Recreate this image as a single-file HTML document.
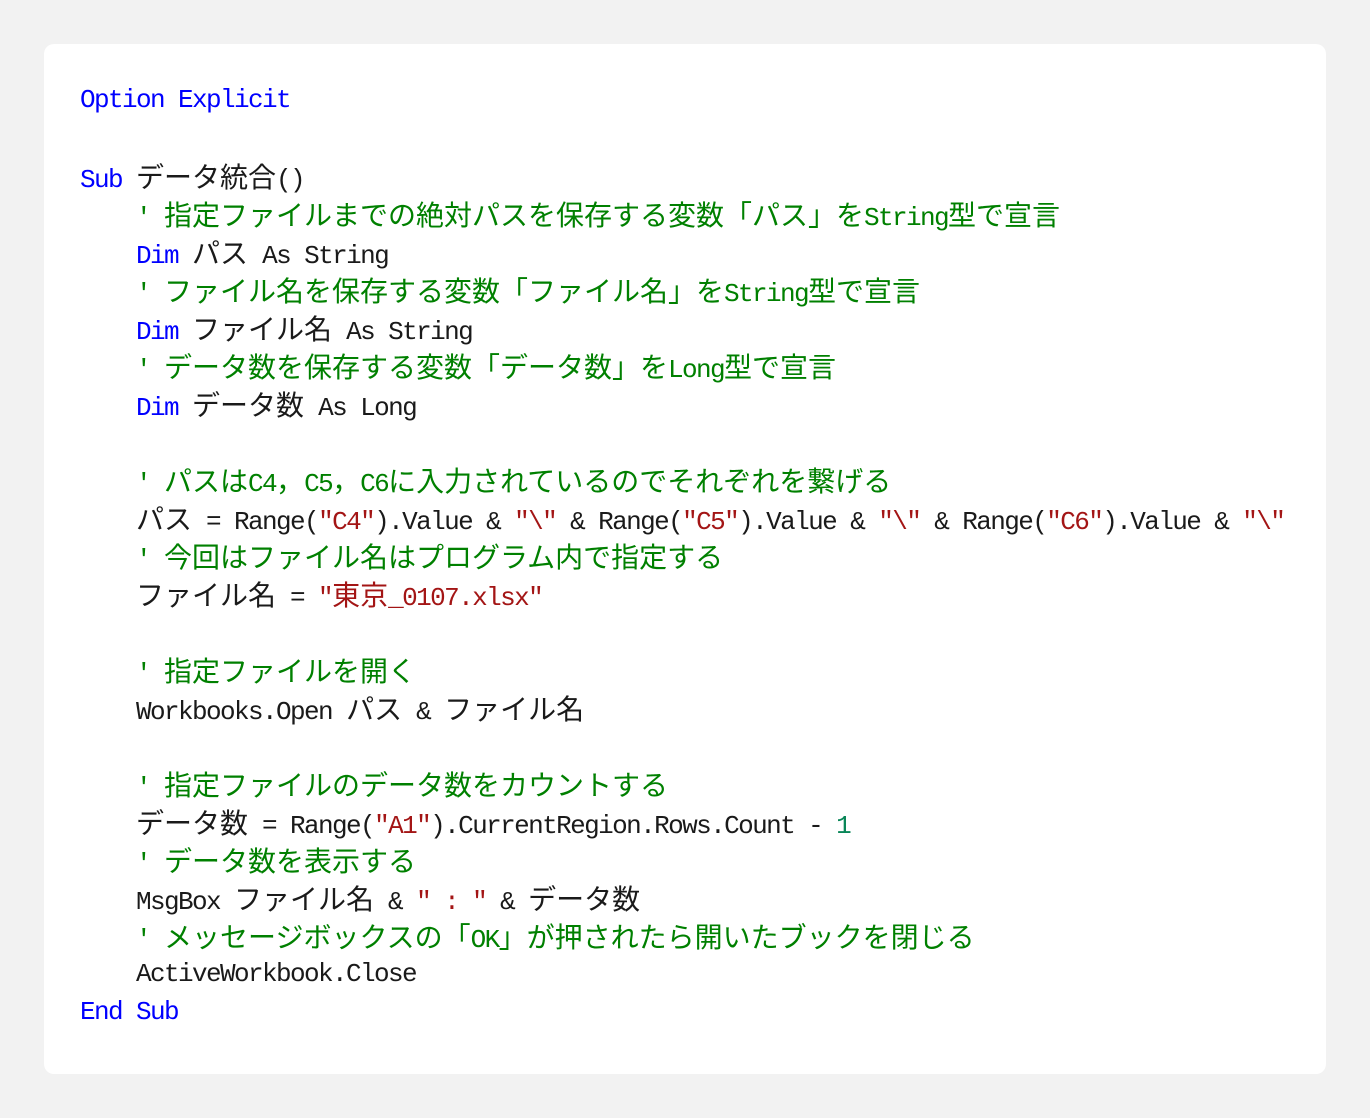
<!DOCTYPE html>
<html><head><meta charset="utf-8"><style>
html,body{margin:0;padding:0}
body{width:1370px;height:1118px;background:#f2f2f2;position:relative;overflow:hidden}
.card{position:absolute;left:44px;top:44px;width:1282px;height:1030px;background:#fff;border-radius:10px}
.code{position:absolute;left:80px;top:81px;font-family:"Liberation Mono",monospace;font-size:26px;letter-spacing:-1.6px;color:#1a1a1a}
.code div{height:38px;line-height:38px;white-space:pre}
.j{font-family:"Noto Sans CJK JP",sans-serif;font-size:28px;line-height:38px;letter-spacing:0}
.k{color:#0000ff}.g{color:#008000}.s{color:#a31515}.n{color:#098658}
</style></head><body>
<div class="card"></div>
<div class="code"><div><span class="k">Option Explicit</span></div><div></div><div><span class="k">Sub</span> <span class="j">データ統合</span>()</div><div class="g">    ' <span class="j">指定ファイルまでの絶対パスを保存する変数「パス」を</span>String<span class="j">型で宣言</span></div><div>    <span class="k">Dim</span> <span class="j">パス</span> As String</div><div class="g">    ' <span class="j">ファイル名を保存する変数「ファイル名」を</span>String<span class="j">型で宣言</span></div><div>    <span class="k">Dim</span> <span class="j">ファイル名</span> As String</div><div class="g">    ' <span class="j">データ数を保存する変数「データ数」を</span>Long<span class="j">型で宣言</span></div><div>    <span class="k">Dim</span> <span class="j">データ数</span> As Long</div><div></div><div class="g">    ' <span class="j">パスは</span>C4<span class="j">，</span>C5<span class="j">，</span>C6<span class="j">に入力されているのでそれぞれを繋げる</span></div><div>    <span class="j">パス</span> = Range(<span class="s">"C4"</span>).Value &amp; <span class="s">"\"</span> &amp; Range(<span class="s">"C5"</span>).Value &amp; <span class="s">"\"</span> &amp; Range(<span class="s">"C6"</span>).Value &amp; <span class="s">"\"</span></div><div class="g">    ' <span class="j">今回はファイル名はプログラム内で指定する</span></div><div>    <span class="j">ファイル名</span> = <span class="s">"<span class="j">東京</span>_0107.xlsx"</span></div><div></div><div class="g">    ' <span class="j">指定ファイルを開く</span></div><div>    Workbooks.Open <span class="j">パス</span> &amp; <span class="j">ファイル名</span></div><div></div><div class="g">    ' <span class="j">指定ファイルのデータ数をカウントする</span></div><div>    <span class="j">データ数</span> = Range(<span class="s">"A1"</span>).CurrentRegion.Rows.Count - <span class="n">1</span></div><div class="g">    ' <span class="j">データ数を表示する</span></div><div>    MsgBox <span class="j">ファイル名</span> &amp; <span class="s">" : "</span> &amp; <span class="j">データ数</span></div><div class="g">    ' <span class="j">メッセージボックスの「</span>OK<span class="j">」が押されたら開いたブックを閉じる</span></div><div>    ActiveWorkbook.Close</div><div><span class="k">End Sub</span></div></div>
</body></html>
